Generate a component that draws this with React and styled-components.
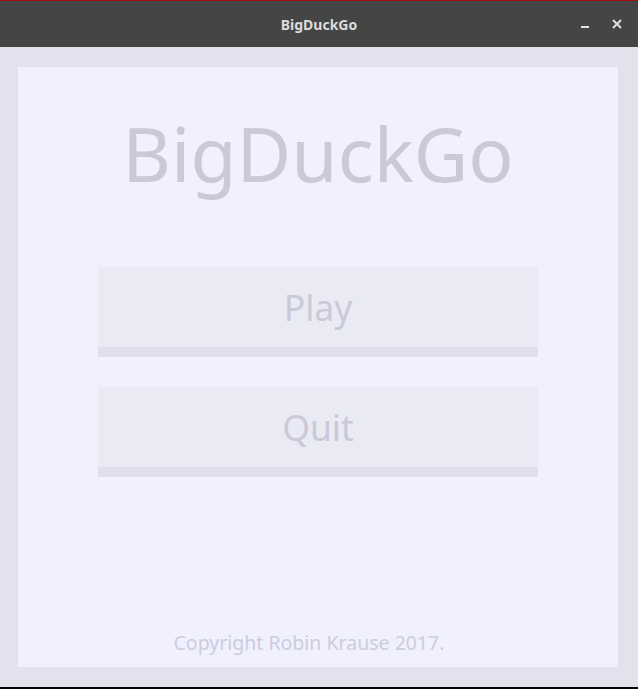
import React from "react";
import styled, { createGlobalStyle } from "styled-components";

const Global = createGlobalStyle`
  html, body { margin: 0; padding: 0; background: #000; }
  body { font-family: "Noto Sans", "Open Sans", sans-serif; }
`;

const Window = styled.div`
  width: 638px;
  height: 689px;
  display: flex;
  flex-direction: column;
  background: #000;
  overflow: hidden;
`;

const TitleBar = styled.div`
  height: 46px;
  border-top: 1px solid #a20f0f;
  background: #454545;
  display: flex;
  align-items: center;
  justify-content: center;
  position: relative;
  flex: none;
`;

const TitleText = styled.div`
  color: #dcdcdc;
  font-family: "Noto Sans", sans-serif;
  font-weight: 700;
  font-size: 14px;
`;

const Controls = styled.div`
  position: absolute;
  right: 14px;
  top: 0;
  bottom: 0;
  display: flex;
  align-items: center;
  gap: 17px;
`;

const Ctl = styled.svg`
  width: 14px;
  height: 14px;
  display: block;
`;

const Frame = styled.div`
  flex: 1;
  margin-bottom: 2px;
  background: #e2e2ef;
  padding: 20px 20px 20px 18px;
  display: flex;
`;

const Panel = styled.div`
  flex: 1;
  background: #f0f0fe;
  display: flex;
  flex-direction: column;
  align-items: center;
`;

const Heading = styled.div`
  margin-top: 49px;
  font-size: 75px;
  line-height: 1;
  color: #c9c9d7;
  font-family: "Noto Sans", sans-serif;
`;

const Button = styled.div`
  width: 440px;
  height: 78px;
  padding-top: 2px;
  margin-top: ${(p) => p.$gap}px;
  background: #eaeaf5;
  border-bottom: 10px solid #e0e0ec;
  display: flex;
  align-items: center;
  justify-content: center;
  color: #c9c9d7;
  font-size: 35.5px;
  line-height: 1;
  flex: none;
`;

const Spacer = styled.div`
  flex: 1;
`;

const Footer = styled.div`
  font-size: 19.5px;
  line-height: 1;
  color: #cdcddb;
  margin-bottom: 15px;
  padding-right: 18px;
`;

export default function App() {
  return (
    <>
      <Global />
      <Window>
        <TitleBar>
          <TitleText>BigDuckGo</TitleText>
          <Controls>
            <Ctl viewBox="0 0 14 14">
              <rect x="2" y="9" width="8" height="2" fill="#e0e0e0" />
            </Ctl>
            <Ctl viewBox="0 0 14 14">
              <path d="M3 3 L11 11 M11 3 L3 11" stroke="#e0e0e0" strokeWidth="2" />
            </Ctl>
          </Controls>
        </TitleBar>
        <Frame>
          <Panel>
            <Heading>BigDuckGo</Heading>
            <Button $gap={76}>Play</Button>
            <Button $gap={30}>Quit</Button>
            <Spacer />
            <Footer>Copyright Robin Krause 2017.</Footer>
          </Panel>
        </Frame>
      </Window>
    </>
  );
}
